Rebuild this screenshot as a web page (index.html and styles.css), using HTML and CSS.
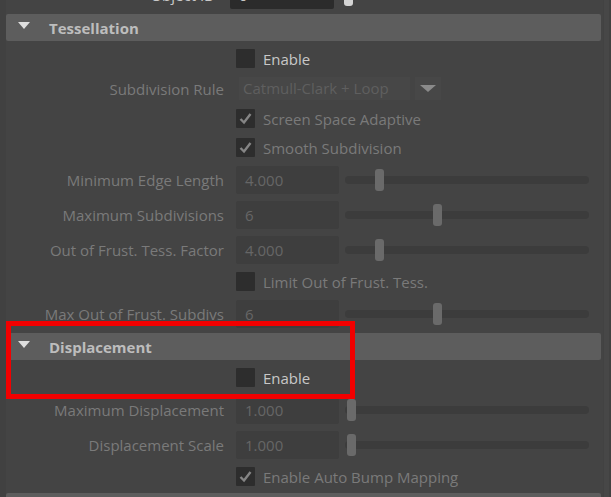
FILE: index.html
```html
<!DOCTYPE html>
<html lang="en" class="html">
<head>
    <meta charset="UTF-8">
    <meta name="viewport" content="width=device-width, initial-scale=1.0">
    <title>Attribute Editor</title>
    <link rel="stylesheet" href="styles.css">
</head>
<body class="body">
    <div class="editor">
        <div class="editor__body">
            <div class="row row--slider row--top">
                <span class="row__label">Object ID</span>
                <div class="field field--on">0</div>
                <div class="slider">
                    <div class="slider__track"></div>
                    <div class="slider__thumb slider__thumb--on" style="left: 2px"></div>
                </div>
            </div>

            <section class="frame">
                <div class="frame__header"><span class="frame__arrow"></span>Tessellation</div>

                <div class="row row--check">
                    <span class="check check--on"><span class="check__box"></span>Enable</span>
                </div>
                <div class="row row--combo">
                    <span class="row__label">Subdivision Rule</span>
                    <div class="combo">Catmull-Clark + Loop</div>
                    <div class="combo__button"><span class="combo__arrow"></span></div>
                </div>
                <div class="row row--check">
                    <span class="check"><span class="check__box"><svg class="check__mark" viewBox="0 0 19 19"><polyline points="4.5,10 8,13.5 14.5,5"/></svg></span>Screen Space Adaptive</span>
                </div>
                <div class="row row--check">
                    <span class="check"><span class="check__box"><svg class="check__mark" viewBox="0 0 19 19"><polyline points="4.5,10 8,13.5 14.5,5"/></svg></span>Smooth Subdivision</span>
                </div>
                <div class="row row--slider">
                    <span class="row__label">Minimum Edge Length</span>
                    <div class="field">4.000</div>
                    <div class="slider">
                        <div class="slider__track"></div>
                        <div class="slider__thumb" style="left: 30px"></div>
                    </div>
                </div>
                <div class="row row--slider">
                    <span class="row__label">Maximum Subdivisions</span>
                    <div class="field">6</div>
                    <div class="slider">
                        <div class="slider__track"></div>
                        <div class="slider__thumb" style="left: 88px"></div>
                    </div>
                </div>
                <div class="row row--slider">
                    <span class="row__label">Out of Frust. Tess. Factor</span>
                    <div class="field">4.000</div>
                    <div class="slider">
                        <div class="slider__track"></div>
                        <div class="slider__thumb" style="left: 30px"></div>
                    </div>
                </div>
                <div class="row row--check">
                    <span class="check"><span class="check__box"></span>Limit Out of Frust. Tess.</span>
                </div>
                <div class="row row--slider">
                    <span class="row__label">Max Out of Frust. Subdivs</span>
                    <div class="field">6</div>
                    <div class="slider">
                        <div class="slider__track"></div>
                        <div class="slider__thumb" style="left: 88px"></div>
                    </div>
                </div>
            </section>

            <section class="frame">
                <div class="frame__header"><span class="frame__arrow"></span>Displacement</div>

                <div class="row row--check">
                    <span class="check check--on"><span class="check__box"></span>Enable</span>
                </div>
                <div class="row row--slider">
                    <span class="row__label">Maximum Displacement</span>
                    <div class="field">1.000</div>
                    <div class="slider">
                        <div class="slider__track"></div>
                        <div class="slider__thumb" style="left: 2px"></div>
                    </div>
                </div>
                <div class="row row--slider">
                    <span class="row__label">Displacement Scale</span>
                    <div class="field">1.000</div>
                    <div class="slider">
                        <div class="slider__track"></div>
                        <div class="slider__thumb" style="left: 2px"></div>
                    </div>
                </div>
                <div class="row row--check">
                    <span class="check"><span class="check__box"><svg class="check__mark" viewBox="0 0 19 19"><polyline points="4.5,10 8,13.5 14.5,5"/></svg></span>Enable Auto Bump Mapping</span>
                </div>
            </section>

            <section class="frame">
                <div class="frame__header"></div>
            </section>
        </div>
        <div class="editor__scroll"></div>

        <div class="mark"></div>
    </div>
</body>
</html>
```

FILE: styles.css
```css
* {
    margin: 0;
    padding: 0;
    box-sizing: border-box;
}

.html,
.body {
    width: 100%;
    height: 100%;
    overflow: hidden;
}

.body {
    background-color: #444444;
    font-family: "Open Sans", "Noto Sans", sans-serif;
    font-size: 15px;
    color: #7a7a7a;
}

.editor {
    position: relative;
    display: flex;
    height: 100%;
}

.editor__body {
    flex: 1;
    margin-top: -23px;
    box-shadow: inset 6px 0 0 #414141;
}

.editor__scroll {
    width: 8px;
    background-color: #474747;
    border-left: 1px solid #424242;
    border-right: 2px solid #414141;
}

/* rows */

.row {
    display: flex;
    align-items: center;
}

.row--check {
    height: 29px;
    padding-left: 236px;
}

.row--combo {
    height: 31px;
}

.row--slider {
    height: 35px;
}

.row__label {
    flex-shrink: 0;
    width: 224px;
    margin-right: 12px;
    text-align: right;
    white-space: nowrap;
}

.row--top .row__label {
    width: 215px;
    margin-right: 15px;
    color: #c8c8c8;
}

.row--top .field {
    width: 104px;
}

.row--top .slider {
    margin-left: 8px;
}

/* frames */

.frame__header {
    display: flex;
    align-items: center;
    height: 27px;
    margin: 2px 2px 3px 6px;
    padding-left: 12px;
    background-color: #5d5d5d;
    border-radius: 2px;
    font-weight: 700;
    color: #bdbdbd;
}

.frame__arrow {
    width: 0;
    height: 0;
    margin-right: 19px;
    margin-bottom: 5px;
    border-left: 6.5px solid transparent;
    border-right: 6.5px solid transparent;
    border-top: 7px solid #dedede;
}

/* controls */

.check {
    display: flex;
    align-items: center;
    gap: 8px;
    white-space: nowrap;
}

.check--on {
    color: #c8c8c8;
}

.check__box {
    width: 19px;
    height: 19px;
    background-color: #2d2d2d;
    border-radius: 1px;
}

.check__mark {
    display: block;
    width: 19px;
    height: 19px;
    fill: none;
    stroke: #858585;
    stroke-width: 2.4;
}

.field {
    flex-shrink: 0;
    width: 103px;
    height: 28px;
    padding-left: 9px;
    line-height: 28px;
    background-color: #3e3e3e;
    border-radius: 2px;
    color: #666666;
}

.field--on {
    background-color: #2b2b2b;
    color: #c8c8c8;
}

.slider {
    position: relative;
    width: 244px;
    height: 22px;
    margin-left: 6px;
}

.slider__track {
    height: 8px;
    margin-top: 7px;
    border-radius: 4px;
    background-color: #3c3c3c;
}

.slider__thumb {
    position: absolute;
    top: 0;
    width: 9px;
    height: 22px;
    border-radius: 3px;
    background-color: #6a6a6a;
}

.slider__thumb--on {
    background-color: #d4d4d4;
}

.combo {
    width: 171px;
    height: 23px;
    margin-left: 3px;
    padding-left: 4px;
    line-height: 23px;
    background-color: #474747;
    color: #5f5f5f;
    white-space: nowrap;
}

.combo__button {
    display: flex;
    align-items: center;
    justify-content: center;
    width: 26px;
    height: 23px;
    margin-left: 5px;
    background-color: #474747;
}

.combo__arrow {
    width: 0;
    height: 0;
    border-left: 8px solid transparent;
    border-right: 8px solid transparent;
    border-top: 7px solid #8a8a8a;
}

/* annotation */

.mark {
    position: absolute;
    left: 6px;
    top: 321px;
    width: 349px;
    height: 78px;
    border: 5px solid #f20000;
}
```
